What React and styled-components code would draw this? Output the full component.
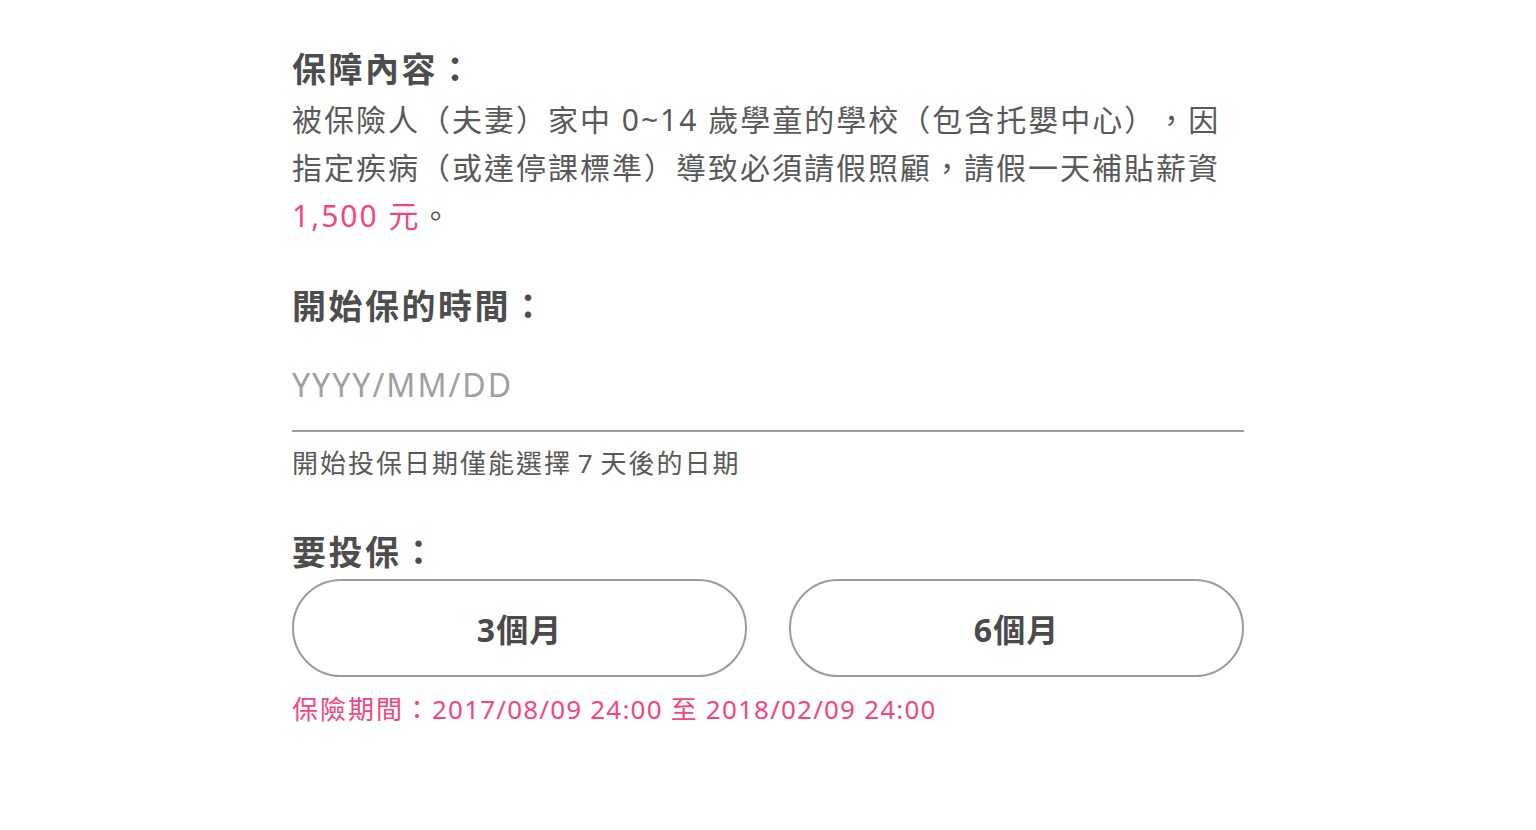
import React, { useState } from 'react'
import styled, { createGlobalStyle } from 'styled-components'

const GlobalStyle = createGlobalStyle`
  html, body {
    margin: 0;
    padding: 0;
    background: #fff;
  }
  body {
    font-family: "Noto Sans", "Noto Sans CJK TC", sans-serif;
    color: #555;
    text-spacing-trim: space-all;
  }
  * {
    box-sizing: border-box;
  }
`

const Page = styled.div`
  width: 952px;
  margin: 0 auto;
  padding: 45px 0 80px;
`

const Title = styled.h2`
  margin: ${props => props.top || 0}px 0 0;
  font-size: 34px;
  line-height: 48px;
  font-weight: 700;
  letter-spacing: 2.5px;
  color: #4d4d4d;
`

const Text = styled.p`
  margin: 3px 0 0;
  font-size: 30px;
  line-height: 48px;
  letter-spacing: 2px;
  color: #595959;
`

const Pink = styled.span`
  color: #f5457f;
`

const DateInput = styled.input`
  display: block;
  width: 100%;
  margin-top: 30px;
  padding: 0 0 22px;
  border: none;
  border-bottom: 2px solid #9b9b9b;
  outline: none;
  font-family: inherit;
  font-size: 32px;
  line-height: 48px;
  height: 72px;
  letter-spacing: 2px;
  color: #4a4a4a;
  background: transparent;
  &::placeholder {
    color: #a0a0a0;
  }
`

const Hint = styled.div`
  margin-top: 13px;
  font-size: 26px;
  line-height: 36px;
  letter-spacing: 2px;
  word-spacing: -3px;
  color: #595959;
`

const Options = styled.div`
  display: grid;
  grid-template-columns: 1fr 1fr;
  gap: 42px;
  margin-top: 3px;
`

const Option = styled.button`
  height: 98px;
  border: 2px solid ${props => (props.active ? '#f5457f' : '#9b9b9b')};
  border-radius: 49px;
  background: #fff;
  font-family: inherit;
  font-size: 32px;
  font-weight: 700;
  letter-spacing: 1px;
  color: ${props => (props.active ? '#f5457f' : '#4a4a4a')};
  cursor: pointer;
`

const Period = styled.div`
  margin-top: 14px;
  font-size: 26px;
  line-height: 36px;
  letter-spacing: 1.2px;
  color: #f5457f;
`

const PeriodLabel = styled.span`
  letter-spacing: 2px;
`

export default function App() {
  const [plan, setPlan] = useState(null)

  return (
    <Page>
      <GlobalStyle />
      <Title>保障內容：</Title>
      <Text>
        被保險人（夫妻）家中 0~14 歲學童的學校（包含托嬰中心），因指定疾病（或達停課標準）導致必須請假照顧，請假一天補貼薪資
        <Pink>1,500 元</Pink>。
      </Text>

      <Title top={42}>開始保的時間：</Title>
      <DateInput placeholder="YYYY/MM/DD" />
      <Hint>開始投保日期僅能選擇 7 天後的日期</Hint>

      <Title top={47}>要投保：</Title>
      <Options>
        <Option active={plan === 3} onClick={() => setPlan(3)}>3個月</Option>
        <Option active={plan === 6} onClick={() => setPlan(6)}>6個月</Option>
      </Options>
      <Period>
        <PeriodLabel>保險期間：</PeriodLabel>2017/08/09 24:00 至 2018/02/09 24:00
      </Period>
    </Page>
  )
}
